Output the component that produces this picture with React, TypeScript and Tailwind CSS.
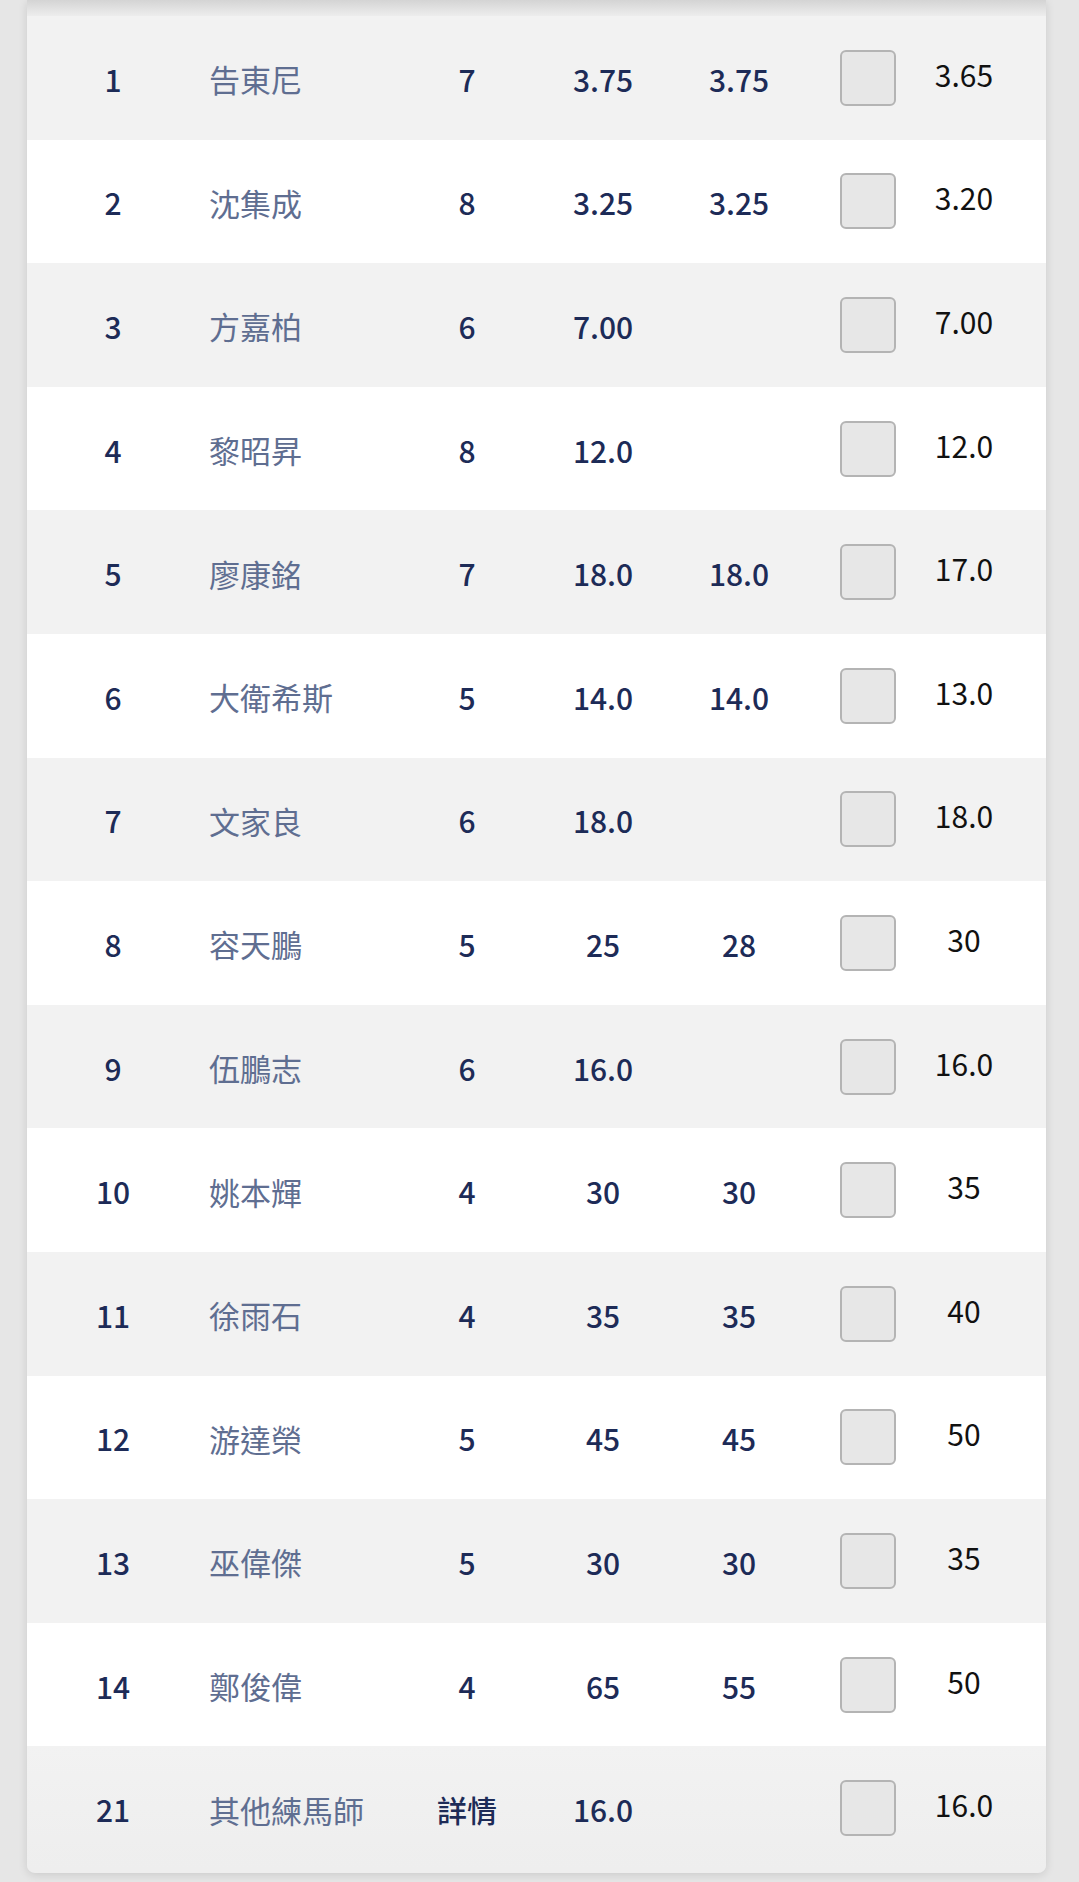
const rows = [
  { no: "1", name: "告東尼", wt: "7", win: "3.75", pla: "3.75", last: "3.65" },
  { no: "2", name: "沈集成", wt: "8", win: "3.25", pla: "3.25", last: "3.20" },
  { no: "3", name: "方嘉柏", wt: "6", win: "7.00", pla: "", last: "7.00" },
  { no: "4", name: "黎昭昇", wt: "8", win: "12.0", pla: "", last: "12.0" },
  { no: "5", name: "廖康銘", wt: "7", win: "18.0", pla: "18.0", last: "17.0" },
  { no: "6", name: "大衛希斯", wt: "5", win: "14.0", pla: "14.0", last: "13.0" },
  { no: "7", name: "文家良", wt: "6", win: "18.0", pla: "", last: "18.0" },
  { no: "8", name: "容天鵬", wt: "5", win: "25", pla: "28", last: "30" },
  { no: "9", name: "伍鵬志", wt: "6", win: "16.0", pla: "", last: "16.0" },
  { no: "10", name: "姚本輝", wt: "4", win: "30", pla: "30", last: "35" },
  { no: "11", name: "徐雨石", wt: "4", win: "35", pla: "35", last: "40" },
  { no: "12", name: "游達榮", wt: "5", win: "45", pla: "45", last: "50" },
  { no: "13", name: "巫偉傑", wt: "5", win: "30", pla: "30", last: "35" },
  { no: "14", name: "鄭俊偉", wt: "4", win: "65", pla: "55", last: "50" },
  { no: "21", name: "其他練馬師", wt: "詳情", win: "16.0", pla: "", last: "16.0" },
];

export default function App() {
  return (
    <div
      className="w-full h-[1882px] bg-[#e6e6e6] pl-[27px] pr-[33px] overflow-hidden"
      style={{ fontFamily: '"Noto Sans CJK TC", "Noto Sans", sans-serif' }}
    >
      <div className="bg-[#eeeeee] pb-[3px] rounded-b-[8px] shadow-[0_2px_10px_rgba(0,0,0,0.12)] overflow-hidden">
        {/* shadow from header above */}
        <div className="h-[16px] bg-gradient-to-b from-[#d4d4d4] to-[#ededed]" />

        {rows.map((r, i) => (
          <div
            key={r.no}
            className={`grid grid-cols-[172px_200px_136px_136px_136px_122px_70px_1fr] items-center h-[123.6px] text-[30px] leading-none ${
              i === rows.length - 1
                ? "bg-gradient-to-b from-[#f2f2f2] to-[#eeeeee]"
                : i % 2 === 0
                ? "bg-[#f2f2f2]"
                : "bg-white"
            }`}
          >
            <div className="text-center font-medium text-[#1d2b57] pt-[2px]">{r.no}</div>
            <div className="pl-[10px] text-[31px] text-[#5f6e91] pt-[2px] whitespace-nowrap">{r.name}</div>
            <div className="text-center font-medium text-[#1d2b57] pt-[2px] whitespace-nowrap">{r.wt}</div>
            <div className="text-center font-medium text-[#1d2b57] pt-[2px]">{r.win}</div>
            <div className="text-center font-medium text-[#1d2b57] pt-[2px]">{r.pla}</div>
            <div className="flex justify-center">
              <div className="w-[56px] h-[56px] rounded-[6px] border-2 border-[#b4b4b4] bg-[#e7e7e7]" />
            </div>
            <div className="text-center text-[#111111] pb-[8px] whitespace-nowrap">{r.last}</div>
            <div />
          </div>
        ))}
      </div>
    </div>
  );
}
